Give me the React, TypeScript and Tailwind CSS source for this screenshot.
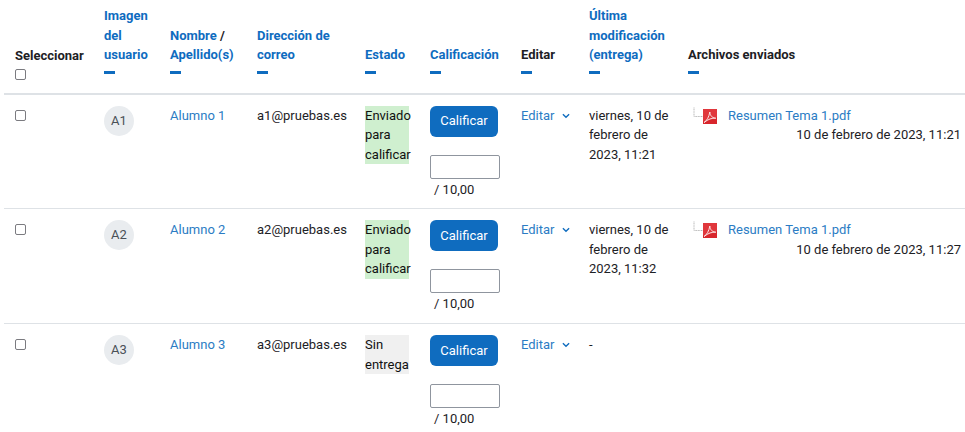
const rows = [
  { initials: 'A1', name: 'Alumno 1', email: 'a1@pruebas.es', status: ['Enviado', 'para', 'calificar'], submitted: true, modified: 'viernes, 10 de febrero de 2023, 11:21', fileDate: '10 de febrero de 2023, 11:21' },
  { initials: 'A2', name: 'Alumno 2', email: 'a2@pruebas.es', status: ['Enviado', 'para', 'calificar'], submitted: true, modified: 'viernes, 10 de febrero de 2023, 11:32', fileDate: '10 de febrero de 2023, 11:27' },
  { initials: 'A3', name: 'Alumno 3', email: 'a3@pruebas.es', status: ['Sin', 'entrega'], submitted: false, modified: '-', fileDate: '' },
]

function Dash() {
  return <div className="mt-[6px] mb-[3px] h-[3px] w-[11px] bg-[#0f6cbf]" />
}

function Check() {
  return <span className="block h-[11px] w-[11px] rounded-[2px] border border-[#7b7b80] bg-white" />
}

function PdfIcon() {
  return (
    <svg width="24" height="17" viewBox="0 0 24 17" className="shrink-0">
      <path d="M1 0.5V9.5H10" fill="none" stroke="#b5b5b5" strokeWidth="1" strokeDasharray="1 0.6" />
      <rect x="10" y="2" width="14" height="15" fill="#d8262c" />
      <path d="M10 2h14v8L10 14z" fill="#e8454a" opacity="0.55" />
      <path d="M11 15.5c3-2 5-5.500 5.800-10.500 .5 4 2 5.500 6 6.200-4-.3-7.500 1-11.800 4.300z" fill="none" stroke="#fbe3e3" strokeWidth="1" />
    </svg>
  )
}

function Head({ lines, link = true, width }: { lines: React.ReactNode[]; link?: boolean; width?: string }) {
  return (
    <th className={`${width} px-[11px] pb-[16px] pt-[6px] align-bottom text-left font-bold ${link ? 'text-[#0f6cbf]' : 'text-[#1d2125]'}`}>
      {lines.map((l, i) => <div key={i}>{l}</div>)}
      <Dash />
    </th>
  )
}

export default function App() {
  return (
    <div className="h-[432px] w-[965px] overflow-hidden bg-white pl-[4px] font-['Roboto','Noto_Sans',sans-serif] text-[13px] leading-[19.5px] text-[#1d2125]">
      <table className="w-[961px] table-fixed border-collapse">
        <thead>
          <tr className="border-b-2 border-[#dee2e6]">
            <th className="w-[89px] px-[11px] pb-[13px] align-bottom text-left font-bold">
              <div>Seleccionar</div>
              <div className="mt-[3px]"><Check /></div>
            </th>
            <Head width="w-[66px]" lines={['Imagen', 'del', 'usuario']} />
            <Head width="w-[87px]" lines={[<>Nombre <span className="text-[#1d2125]">/</span></>, 'Apellido(s)']} />
            <Head width="w-[108px]" lines={['Dirección de', 'correo']} />
            <Head width="w-[65px]" lines={['Estado']} />
            <Head width="w-[91px]" lines={['Calificación']} />
            <Head width="w-[68px]" link={false} lines={['Editar']} />
            <Head width="w-[99px]" lines={['Última', 'modificación', '(entrega)']} />
            <Head link={false} lines={['Archivos enviados']} />
          </tr>
        </thead>
        <tbody>
          {rows.map((r) => (
            <tr key={r.name} className="h-[115px] border-b border-[#dee2e6] align-top">
              <td className="px-[11px] pt-[15px]"><Check /></td>
              <td className="px-[11px] pt-[11px]">
                <div className="flex h-[30px] w-[30px] items-center justify-center rounded-full bg-[#e9ecef] text-[13px] text-[#495057]">{r.initials}</div>
              </td>
              <td className="px-[11px] pt-[11px] text-[#2b7cc4]">{r.name}</td>
              <td className="px-[11px] pt-[11px]">{r.email}</td>
              <td className="px-[11px] pt-[11px]">
                <div className={`w-[44px] text-[#111] ${r.submitted ? 'bg-[#cfefcf]' : 'bg-[#f0f0f0]'}`}>
                  {r.status.map((s) => <div key={s}>{s}</div>)}
                </div>
              </td>
              <td className="px-[11px] pt-[11px]">
                <button className="h-[31px] w-[68px] rounded-[6px] bg-[#0f6cbf] text-center text-white">Calificar</button>
                <div className="mt-[18px] h-[24px] w-[70px] rounded-[2px] border border-[#8f959e] bg-white" />
                <div className="mt-[1px] pl-[4px]">/ 10,00</div>
              </td>
              <td className="px-[11px] pt-[11px] text-[#2b7cc4]">
                <div className="flex items-center whitespace-nowrap">
                  Editar
                  <svg width="8" height="6" viewBox="0 0 9 6" className="ml-[7px] mt-[1px] shrink-0">
                    <path d="M1 1l3.500 3.500L8 1" fill="none" stroke="#0f6cbf" strokeWidth="1.500" />
                  </svg>
                </div>
              </td>
              <td className="pl-[11px] pr-[8px] pt-[11px]">{r.modified}</td>
              <td className="pl-[16px] pr-[4px] pt-[11px]">
                {r.fileDate && (
                  <>
                    <div className="flex items-start">
                      <div className="pt-[1px]"><PdfIcon /></div>
                      <span className="ml-[11px] text-[#2b7cc4]">Resumen Tema 1.pdf</span>
                    </div>
                    <div className="text-right whitespace-nowrap">{r.fileDate}</div>
                  </>
                )}
              </td>
            </tr>
          ))}
        </tbody>
      </table>
    </div>
  )
}
